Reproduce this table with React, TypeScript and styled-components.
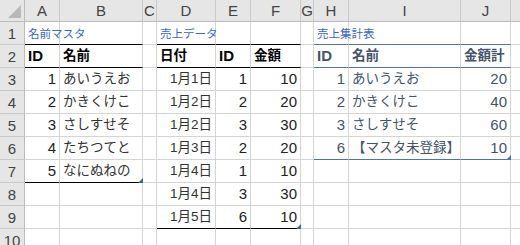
import styled, { createGlobalStyle } from "styled-components"

const GlobalStyle = createGlobalStyle`
    html, body {
        margin: 0;
        padding: 0;
        background: #ffffff;
        overflow: hidden;
    }
`

const COLS = [35, 83, 14, 59, 35, 50, 13, 35, 112, 50, 40]
// K is off the right edge, only its left sliver shows
const LETTERS = ["A", "B", "C", "D", "E", "F", "G", "H", "I", "J", ""]
const ROWS = 10

const BLACK = "#000000"
const BLUE = "#4f72b0"
const TITLE = "#3a66cc"
const SLATE = "#44546a"

const Sheet = styled.div`
    display: grid;
    grid-template-columns: 25px ${COLS.map(w => `${w}px`).join(" ")};
    grid-template-rows: 22px repeat(${ROWS}, 23px);
    width: 520px;
    height: 245px;
    overflow: hidden;
    font-family: "Liberation Sans", "Noto Sans CJK JP", sans-serif;
`

const Corner = styled.div`
    position: relative;
    background: #e6e6e6;
    border-right: 1px solid #bcbcbc;
    border-bottom: 1px solid #bcbcbc;
    box-sizing: border-box;
    &::after {
        content: "";
        position: absolute;
        right: 3px;
        bottom: 3px;
        width: 0;
        height: 0;
        border-left: 13px solid transparent;
        border-bottom: 13px solid #b8b8b8;
    }
`

const ColHead = styled.div`
    display: flex;
    align-items: center;
    justify-content: center;
    background: #e6e6e6;
    border-right: 1px solid #cacaca;
    border-bottom: 1px solid #bcbcbc;
    box-sizing: border-box;
    color: #444444;
    font-size: 15px;
    overflow: hidden;
`

const RowHead = styled.div`
    display: flex;
    align-items: center;
    justify-content: center;
    background: #e6e6e6;
    border-right: 1px solid #bcbcbc;
    border-bottom: 1px solid #cacaca;
    box-sizing: border-box;
    color: #444444;
    font-size: 15px;
`

const Cell = styled.div<{ $line?: string; $right?: boolean; $color?: string; $bold?: boolean; $jp?: boolean }>`
    position: relative;
    display: flex;
    align-items: flex-end;
    justify-content: ${p => (p.$right ? "flex-end" : "flex-start")};
    padding: 0 3px 2px 3px;
    box-sizing: border-box;
    border-right: 1px solid #d4d4d4;
    border-bottom: 1px solid ${p => p.$line ?? "#d4d4d4"};
    color: ${p => p.$color ?? (p.$jp && !p.$bold ? "#333333" : "#222222")};
    font-weight: ${p => (p.$bold ? 700 : 400)};
    font-size: ${p => (p.$jp ? "13.5px" : "15px")};
    line-height: 18px;
    white-space: nowrap;
`

const Title = styled.span`
    color: ${TITLE};
    font-size: 11.5px;
    line-height: 16px;
    position: relative;
    z-index: 1;
`

const Handle = styled.span<{ $color: string }>`
    position: absolute;
    right: -1px;
    bottom: -1px;
    width: 0;
    height: 0;
    border-left: 5px solid transparent;
    border-bottom: 5px solid ${p => p.$color};
`

type CellDef = {
    text?: string
    right?: boolean
    bold?: boolean
    jp?: boolean
    title?: boolean
    color?: string
    line?: string
    handle?: string
}

// sheet contents, keyed by "row:colIndex" (colIndex 0 = A)
const cells: Record<string, CellDef> = {}
const put = (row: number, col: number, def: CellDef) => {
    cells[`${row}:${col}`] = { ...cells[`${row}:${col}`], ...def }
}

type Table = {
    title: string
    start: number
    heads: { text: string; jp: boolean }[]
    rows: (string | number)[][]
    line: string
    color?: string
    headColor?: string
}

const tables: Table[] = [
    {
        title: "名前マスタ",
        start: 0,
        heads: [{ text: "ID", jp: false }, { text: "名前", jp: true }],
        rows: [[1, "あいうえお"], [2, "かきくけこ"], [3, "さしすせそ"], [4, "たちつてと"], [5, "なにぬねの"]],
        line: BLACK,
    },
    {
        title: "売上データ",
        start: 3,
        heads: [{ text: "日付", jp: true }, { text: "ID", jp: false }, { text: "金額", jp: true }],
        rows: [
            ["1月1日", 1, 10],
            ["1月2日", 2, 20],
            ["1月2日", 3, 30],
            ["1月3日", 2, 20],
            ["1月4日", 1, 10],
            ["1月4日", 3, 30],
            ["1月5日", 6, 10],
        ],
        line: BLACK,
    },
    {
        title: "売上集計表",
        start: 7,
        heads: [{ text: "ID", jp: false }, { text: "名前", jp: true }, { text: "金額計", jp: true }],
        rows: [[1, "あいうえお", 20], [2, "かきくけこ", 40], [3, "さしすせそ", 60], [6, "【マスタ未登録】", 10]],
        line: BLUE,
        color: SLATE,
        headColor: SLATE,
    },
]

tables.forEach(t => {
    put(1, t.start, { text: t.title, title: true })
    t.heads.forEach((h, i) => {
        put(1, t.start + i, { line: t.line })
        put(2, t.start + i, { text: h.text, jp: h.jp, bold: true, line: t.line, color: t.headColor ?? "#000000" })
    })
    t.rows.forEach((r, ri) => {
        const row = 3 + ri
        r.forEach((v, ci) => {
            const isText = typeof v === "string" && !/^1月/.test(v)
            put(row, t.start + ci, {
                text: String(v),
                right: !isText,
                jp: typeof v === "string",
                color: t.color,
            })
        })
    })
    const last = 2 + t.rows.length
    t.heads.forEach((_, i) => put(last, t.start + i, { line: t.line }))
    put(last, t.start + t.heads.length - 1, { handle: t.line === BLACK ? "#44609a" : BLUE })
})

export default function App() {
    return (
        <>
            <GlobalStyle />
            <Sheet>
                <Corner />
                {LETTERS.map((l, i) => <ColHead key={i}>{l}</ColHead>)}
                {Array.from({ length: ROWS }, (_, ri) => {
                    const row = ri + 1
                    return [
                        <RowHead key={`h${row}`}>{row}</RowHead>,
                        ...LETTERS.map((_, ci) => {
                            const c = cells[`${row}:${ci}`] ?? {}
                            return (
                                <Cell
                                    key={`${row}:${ci}`}
                                    $line={c.line}
                                    $right={c.right}
                                    $bold={c.bold}
                                    $jp={c.jp}
                                    $color={c.color}
                                >
                                    {c.title ? <Title>{c.text}</Title> : c.text}
                                    {c.handle && <Handle $color={c.handle} />}
                                </Cell>
                            )
                        }),
                    ]
                })}
            </Sheet>
        </>
    )
}
